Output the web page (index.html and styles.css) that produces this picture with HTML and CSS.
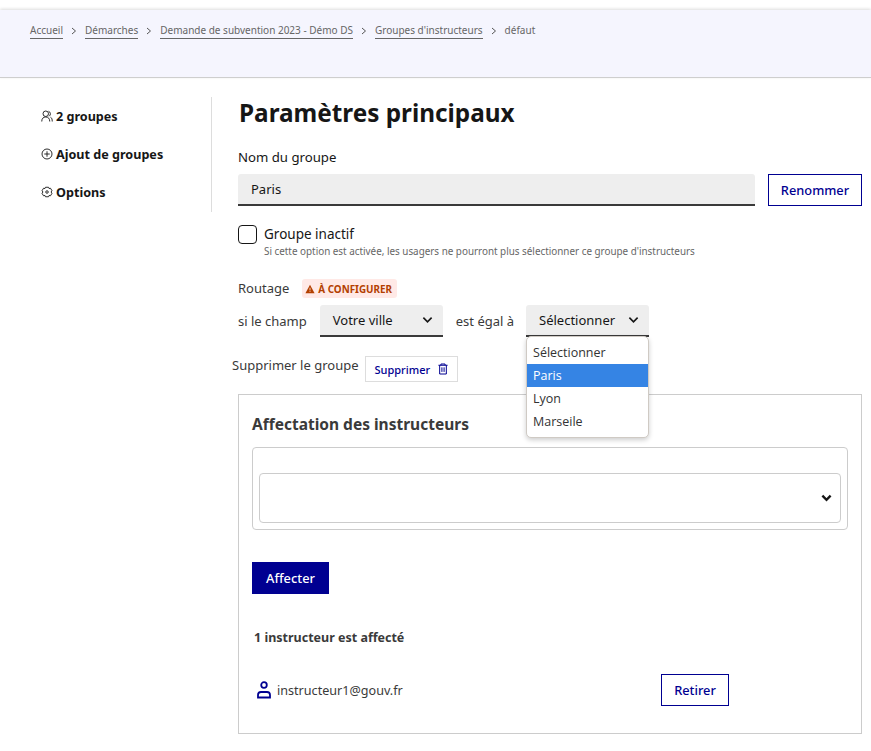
FILE: index.html
```html
<!DOCTYPE html>
<html lang="fr">
<head>
	<meta charset="UTF-8">
	<title>Paramètres principaux</title>
	<link rel="stylesheet" href="styles.css">
</head>
<body>
	<div class="top-gap"></div>
	<nav class="crumbs">
		<a href="#">Accueil</a>
		<svg class="sep" viewBox="0 0 22 8"><path d="M9 1l3.500 3L9 7"/></svg>
		<a href="#">Démarches</a>
		<svg class="sep" viewBox="0 0 22 8"><path d="M9 1l3.500 3L9 7"/></svg>
		<a href="#">Demande de subvention 2023 - Démo DS</a>
		<svg class="sep" viewBox="0 0 22 8"><path d="M9 1l3.500 3L9 7"/></svg>
		<a href="#">Groupes d'instructeurs</a>
		<svg class="sep" viewBox="0 0 22 8"><path d="M9 1l3.500 3L9 7"/></svg>
		<span>défaut</span>
	</nav>

	<div class="page">
		<ul class="side">
			<li>
				<svg class="side-icon" viewBox="0 0 24 24"><circle cx="9.500" cy="7.500" r="5.500"/><path d="M1.500 23c0-6 3-9 8-9s8 3 8 9"/><path d="M15 2.500a5.500 5.500 0 0 1 1 10M19 14.500c2.500 1 3.500 4 3.500 8.500"/></svg>
				2 groupes
			</li>
			<li>
				<svg class="side-icon" viewBox="0 0 24 24"><circle cx="12" cy="12" r="10"/><path d="M12 6.500v11M6.500 12h11"/></svg>
				Ajout de groupes
			</li>
			<li>
				<svg class="side-icon" viewBox="0 0 24 24"><path d="M9 2.500h6l1 2.500 3-.5 3 5-2 2.500 2 2.500-3 5-3-.5-1 2.500H9l-1-2.500-3 .5-3-5 2-2.500-2-2.500 3-5 3 .5z"/><circle cx="12" cy="12" r="2.500" class="dot"/></svg>
				Options
			</li>
		</ul>

		<main class="main">
			<h1>Paramètres principaux</h1>

			<label class="name-label">Nom du groupe</label>
			<div class="name-row">
				<div class="name-input">Paris</div>
				<button class="btn btn-line" type="button">Renommer</button>
			</div>

			<div class="check-row">
				<span class="check"></span>
				<div>
					<div class="check-label">Groupe inactif</div>
					<div class="check-hint">Si cette option est activée, les usagers ne pourront plus sélectionner ce groupe d'instructeurs</div>
				</div>
			</div>

			<div class="routing-head">
				<span class="routing-title">Routage</span>
				<span class="badge">
					<svg viewBox="0 0 12 12"><path d="M6 1l5.500 10H.5z"/><path class="mark" d="M6 4.500v3.200M6 8.600v1"/></svg>
					À CONFIGURER
				</span>
			</div>

			<div class="routing-rule">
				<span>si le champ</span>
				<div class="select select-field">
					Votre ville
					<svg class="chev" viewBox="0 0 12 8"><path d="M1.500 1.500L6 6l4.500-4.500"/></svg>
				</div>
				<span class="equals">est égal à</span>
				<div class="select-wrap">
					<div class="select select-value">
						Sélectionner
						<svg class="chev" viewBox="0 0 12 8"><path d="M1.500 1.500L6 6l4.500-4.500"/></svg>
					</div>
					<ul class="menu">
						<li>Sélectionner</li>
						<li class="active">Paris</li>
						<li>Lyon</li>
						<li>Marseile</li>
					</ul>
				</div>
			</div>

			<div class="delete-row">
				<span>Supprimer le groupe</span>
				<button class="btn-delete" type="button">
					Supprimer
					<svg viewBox="0 0 12 14"><path d="M3.500 2.500V1h5v1.500M.5 2.500h11M2 2.500V13h8V2.500M4.700 5v5.500M7.300 5v5.500"/></svg>
				</button>
			</div>

			<section class="card">
				<h2>Affectation des instructeurs</h2>
				<div class="combo-box">
					<div class="combo">
						<svg class="combo-chev" viewBox="0 0 12 8"><path d="M1.500 1.500L6 6l4.500-4.500"/></svg>
					</div>
				</div>
				<button class="btn btn-fill" type="button">Affecter</button>
				<h3>1 instructeur est affecté</h3>
				<div class="person">
					<div class="person-name">
						<svg viewBox="0 0 16 18"><circle cx="8" cy="4" r="2.800"/><path d="M2 16.500v-2.500c0-2 1.500-3 3-3h6c1.500 0 3 1 3 3v2.500z"/></svg>
						instructeur1@gouv.fr
					</div>
					<button class="btn btn-line btn-retire" type="button">Retirer</button>
				</div>
			</section>
		</main>
	</div>
</body>
</html>
```

FILE: styles.css
```css
* {
	box-sizing: border-box;
}
body {
	margin: 0;
	font-family: "Noto Sans", "Liberation Sans", sans-serif;
	font-size: 14px;
	color: #3a3a3a;
	background: #fff;
}
.top-gap {
	height: 10px;
}

/* fil d'ariane */
.crumbs {
	height: 68px;
	padding: 13px 0 0 30px;
	display: flex;
	align-items: flex-start;
	font-size: 10px;
	line-height: 15px;
	color: #666;
	background: #f5f5fe;
	border-bottom: 1px solid #cecece;
	box-shadow: 0 -1px 3px rgba(0, 0, 0, .14);
}
.crumbs a {
	color: #666;
	text-decoration: none;
	border-bottom: 1px solid #666;
}
.crumbs .sep {
	width: 22px;
	height: 8px;
	margin-top: 4px;
	fill: none;
	stroke: #555;
	stroke-width: 1;
}

.page {
	display: flex;
	padding: 19px 9px 0 0;
}

/* menu de gauche */
.side {
	width: 212px;
	height: 115px;
	flex: none;
	list-style: none;
	margin: 0;
	padding: 0 0 0 41px;
	border-right: 1px solid #ddd;
}
.side li {
	display: flex;
	align-items: center;
	gap: 3px;
	height: 38px;
	font-size: 12.6px;
	font-weight: 700;
	color: #161616;
}
.side-icon {
	width: 12px;
	height: 12px;
	fill: none;
	stroke: #161616;
	stroke-width: 1.800;
}

.main {
	flex: 1;
	margin-left: 26px;
}
h1 {
	margin: 0;
	padding-left: 1px;
	font-size: 24.3px;
	line-height: 32px;
	font-weight: 700;
	color: #161616;
}
.name-label {
	display: block;
	margin-top: 18px;
	line-height: 20px;
	font-size: 13.2px;
	color: #161616;
}
.name-row {
	display: flex;
	gap: 13px;
	margin-top: 7px;
}
.name-input {
	flex: 1;
	height: 32px;
	padding-left: 13px;
	font-size: 13px;
	line-height: 31px;
	color: #161616;
	background: #eee;
	border-bottom: 2px solid #3a3a3a;
	border-radius: 3px 3px 0 0;
}
.btn {
	height: 32px;
	padding: 0;
	font-family: inherit;
	font-size: 12.8px;
	font-weight: 500;
	background: #fff;
	color: #000091;
	border: 1px solid #000091;
}
.btn-line {
	width: 94px;
}

.check-row {
	display: flex;
	gap: 7px;
	margin-top: 19px;
}
.check {
	width: 19px;
	height: 19px;
	flex: none;
	border: 1px solid #161616;
	border-radius: 4px;
}
.check-label {
	font-size: 13.5px;
	line-height: 18px;
	color: #161616;
}
.check-hint {
	margin-top: 1px;
	padding-bottom: 1px;
	font-size: 9.870px;
	line-height: 14px;
	color: #666;
}

.routing-head {
	display: flex;
	align-items: center;
	gap: 13px;
	margin-top: 20px;
	height: 19px;
	font-size: 13px;
}
.routing-title {
	position: relative;
	top: -1px;
}
.badge {
	display: flex;
	align-items: center;
	gap: 3px;
	width: 95px;
	height: 19px;
	padding-left: 3px;
	font-size: 9.900px;
	font-weight: 700;
	color: #b34000;
	background: #ffe9e6;
	border-radius: 3px;
}
.badge svg {
	width: 10px;
	height: 10px;
	fill: #b34000;
}
.badge .mark {
	fill: none;
	stroke: #ffe9e6;
	stroke-width: 1;
}

.routing-rule {
	display: flex;
	align-items: center;
	margin-top: 7px;
	font-size: 13px;
}
.select {
	display: flex;
	align-items: center;
	justify-content: space-between;
	height: 32px;
	padding: 0 10px 0 13px;
	color: #161616;
	background: #eee;
	border-bottom: 2px solid #3a3a3a;
	border-radius: 3px 3px 0 0;
}
.select-field {
	width: 123px;
	margin-left: 13px;
}
.equals {
	margin: 0 12px 0 13px;
}
.select-wrap {
	position: relative;
}
.select-value {
	width: 123px;
}
.chev {
	width: 11px;
	height: 8px;
	fill: none;
	stroke: #161616;
	stroke-width: 1.800;
}
.menu {
	position: absolute;
	z-index: 2;
	top: 31px;
	left: 0;
	width: 123px;
	margin: 0;
	padding: 4px 0;
	list-style: none;
	font-family: "Open Sans", "Noto Sans", sans-serif;
	font-size: 12.5px;
	color: #333;
	background: #fff;
	border: 1px solid #cfcac4;
	border-radius: 5px;
	box-shadow: 0 2px 5px rgba(0, 0, 0, .2);
}
.menu li {
	height: 23px;
	padding-left: 6px;
	line-height: 23px;
}
.menu .active {
	color: #fff;
	background: #3584e4;
}

.delete-row {
	display: flex;
	align-items: center;
	gap: 6px;
	margin: 19px 0 0 -6px;
	font-size: 13px;
}
.delete-row span {
	position: relative;
	top: -4px;
}
.btn-delete {
	display: flex;
	align-items: center;
	gap: 8px;
	width: 93px;
	height: 26px;
	padding: 0 0 0 9px;
	font-family: inherit;
	font-size: 11px;
	font-weight: 500;
	color: #000091;
	background: #fff;
	border: 1px solid #ddd;
}
.btn-delete svg {
	width: 10px;
	height: 12px;
	fill: none;
	stroke: #000091;
	stroke-width: 1.200;
}

.card {
	height: 340px;
	margin-top: 12px;
	padding: 0 13px;
	border: 1px solid #ccc;
}
h2 {
	margin: 19px 0 0;
	font-size: 15.5px;
	line-height: 21px;
	font-weight: 700;
	color: #3a3a3a;
}
.combo-box {
	height: 83px;
	margin-top: 12px;
	padding: 25px 6px 0;
	border: 1px solid #ccc;
	border-radius: 4px;
}
.combo {
	display: flex;
	align-items: center;
	justify-content: flex-end;
	height: 50px;
	padding-right: 8px;
	border: 1px solid #ccc;
	border-radius: 4px;
}
.combo-chev {
	width: 11px;
	height: 8px;
	fill: none;
	stroke: #161616;
	stroke-width: 2.600;
}
.btn-fill {
	display: block;
	width: 77px;
	margin-top: 32px;
	color: #fff;
	background: #000091;
}
h3 {
	margin: 35px 0 0 2px;
	font-size: 12.5px;
	line-height: 18px;
	font-weight: 700;
}
.person {
	display: flex;
	align-items: center;
	justify-content: space-between;
	width: 473px;
	margin: 27px 0 0 4px;
}
.person-name {
	display: flex;
	align-items: center;
	gap: 5px;
	font-size: 12.6px;
}
.person-name svg {
	width: 16px;
	height: 18px;
	fill: none;
	stroke: #000091;
	stroke-width: 1.800;
}
.btn-retire {
	width: 68px;
}
```
